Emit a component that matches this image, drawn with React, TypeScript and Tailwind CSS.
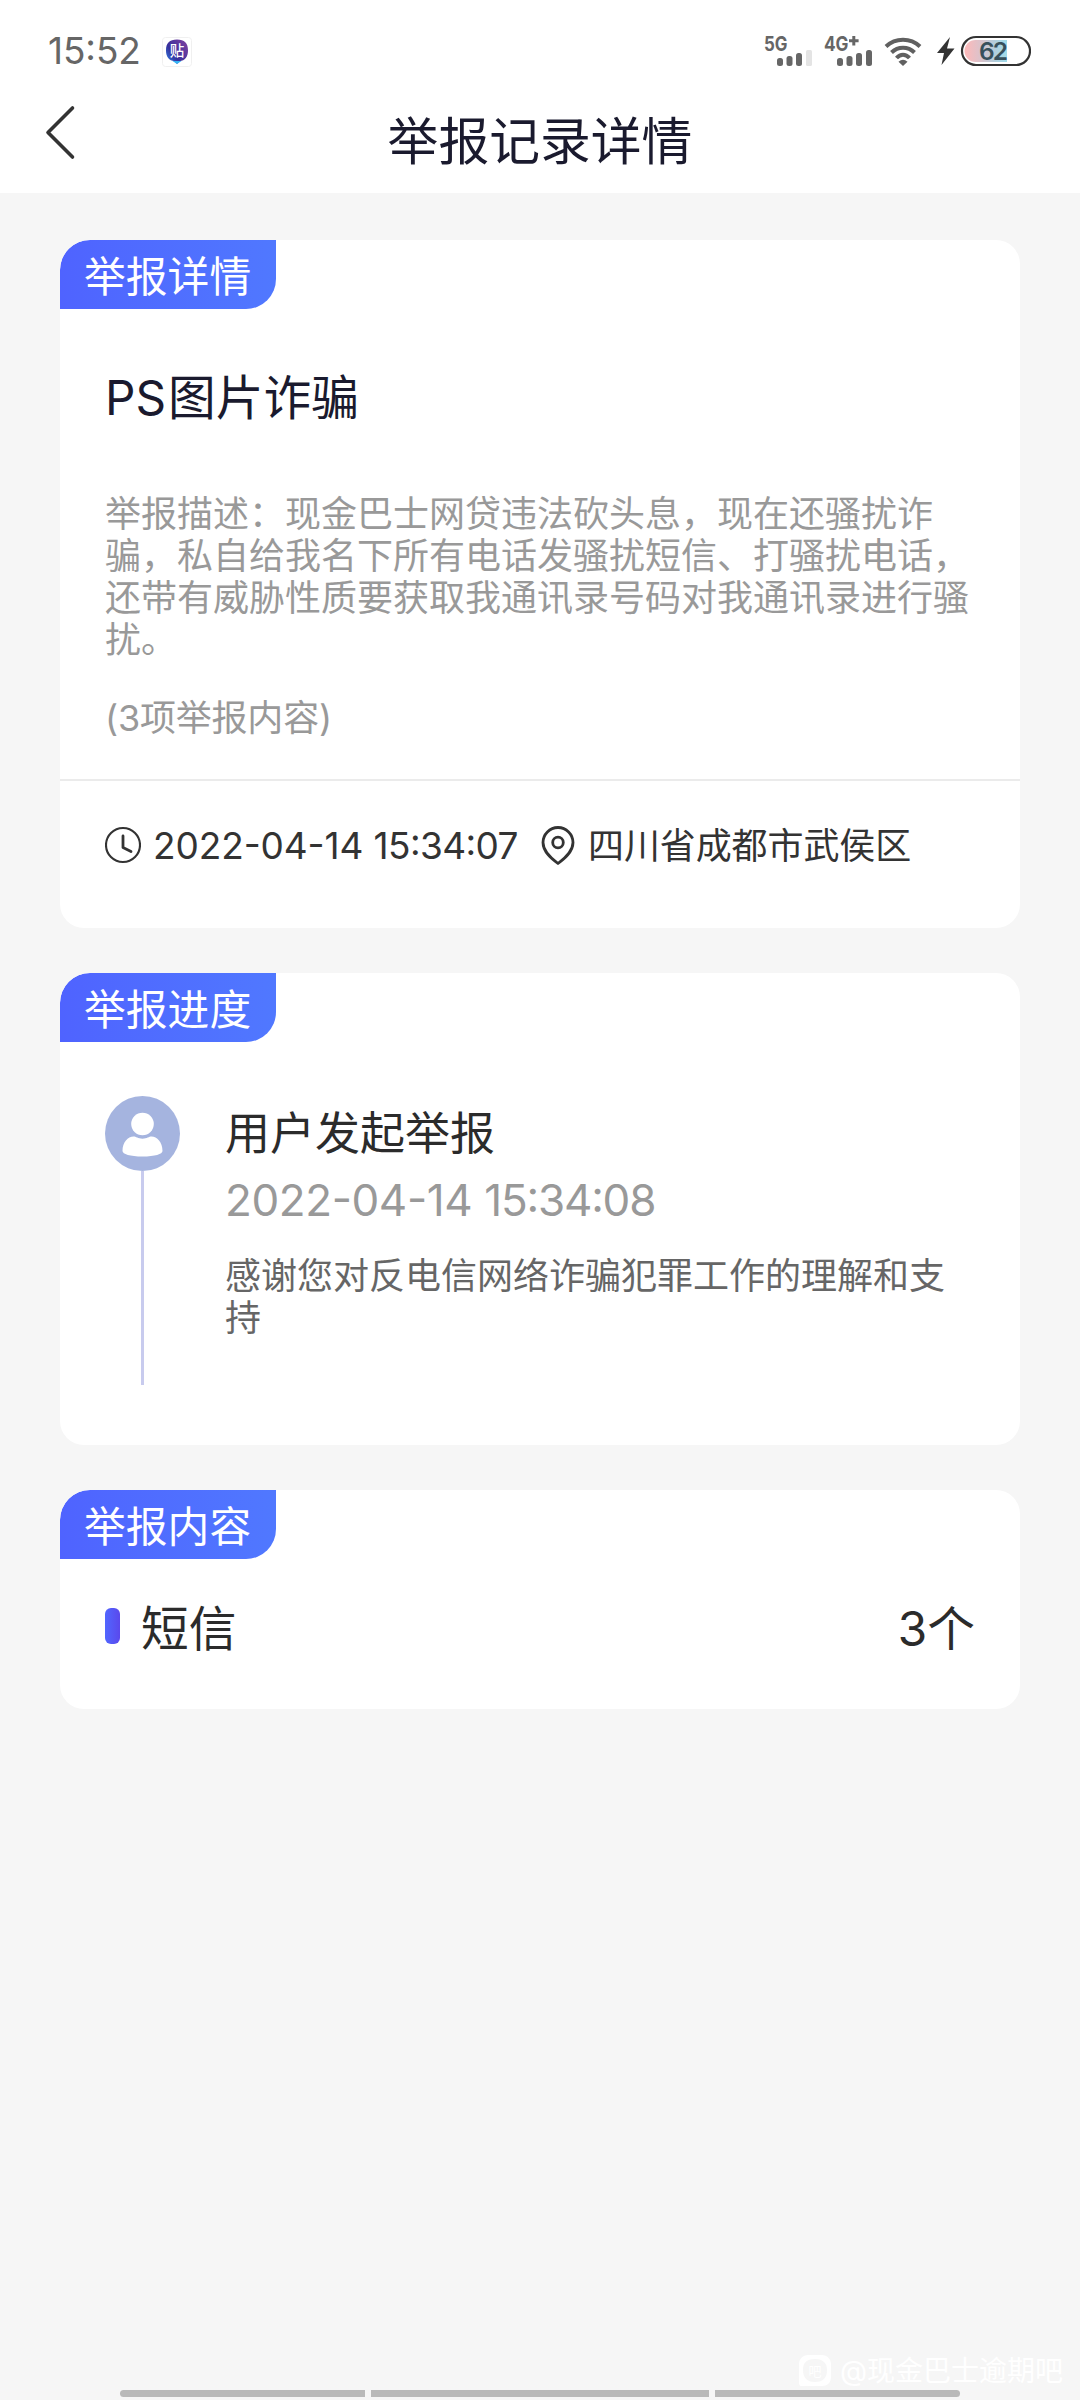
import React from 'react';

function Tag({ children }: { children: string }) {
  return (
    <div className="flex h-[69px] w-[216px] items-center rounded-tl-[30px] rounded-br-[30px] bg-linear-to-r from-[#4f63ff] to-[#5078ff] pt-[5px] pl-[24px] text-[41.8px] leading-[64px] text-white">
      {children}
    </div>
  );
}

function Card({ title, className, children }: { title: string; className: string; children: React.ReactNode }) {
  return (
    <section className={'overflow-hidden rounded-[24px] rounded-tl-[30px] bg-white ' + className}>
      <Tag>{title}</Tag>
      {children}
    </section>
  );
}

function StatusBar() {
  return (
    <div className="flex h-[100px] items-start pr-[49px] pl-[48px]">
      <span className="mt-[26px] w-[114px] text-[37px] leading-[50px] tracking-[-0.1px] text-[#666] [font-feature-settings:'case']">15:52</span>
      <svg className="mt-[37px]" width="30" height="30" viewBox="0 0 30 30">
        <defs>
          <linearGradient id="tie" x1="0" y1="1" x2="1" y2="0.2">
            <stop offset="0" stopColor="#2f8cf0" />
            <stop offset="0.4" stopColor="#35309c" />
            <stop offset="1" stopColor="#7a3fa0" />
          </linearGradient>
        </defs>
        <rect x="0.5" y="0.5" width="29" height="29" rx="3" fill="#fff" stroke="#f0f0f0" />
        <path d="M15 2.5C22.5 2.5 26 6 26 13.500C26 20 23 23.500 17.500 24.200L15 27L12.500 24.200C7 23.500 4 20 4 13.500C4 6 7.500 2.500 15 2.500Z" fill="url(#tie)" />
        <path d="M10.500 24L15 27L19.500 24Z" fill="#35b4f5" />
        <text x="15" y="19.300" fontSize="14.500" fontWeight="500" textAnchor="middle" fill="#fff">贴</text>
      </svg>
      <div className="grow" />
      <svg className="mt-[30px]" width="268" height="42" viewBox="0 0 268 42">
        <g fill="#666" fontWeight="700" fontSize="20">
          <text x="1" y="20.500" textLength="23.500" lengthAdjust="spacingAndGlyphs">5G</text>
          <text x="61" y="20.500" textLength="24.500" lengthAdjust="spacingAndGlyphs">4G</text>
          <path d="M90.800 6V15.500M86 10.800H95.600" stroke="#666" strokeWidth="3" />
        </g>
        <g fill="#666">
          <rect x="14" y="28" width="6" height="8" rx="2.500" />
          <rect x="23.500" y="26" width="6" height="10" rx="2.500" />
          <rect x="33" y="23" width="6" height="13" rx="2.500" />
          <rect x="43" y="20" width="6" height="16" rx="1.500" fill="#e4e4e4" />
          <rect x="74" y="28" width="6" height="8" rx="2.500" />
          <rect x="83.500" y="26" width="6" height="10" rx="2.500" />
          <rect x="93" y="23" width="6" height="13" rx="2.500" />
          <rect x="103" y="20" width="6" height="16" rx="2.500" />
        </g>
        <g transform="translate(1 0)" fill="none" stroke="#606060" strokeWidth="4">
          <path d="M122 16.500C131.500 7.500 146.500 7.500 156 16.500" />
          <path d="M127.500 22.500C134 16 144 16 150.500 22.500" />
          <path d="M132.500 28C136.500 23.500 141.500 23.500 145.500 28" />
          <path d="M134.500 31.800Q139 27.500 143.500 31.800L139 36Z" fill="#606060" stroke="none" />
        </g>
        <path d="M187 7L174 23H181L178.500 35L191.500 18.500H184Z" fill="#333" />
        <defs>
          <linearGradient id="charge" x1="0" y1="0" x2="1" y2="0">
            <stop offset="0" stopColor="#ffb9b9" />
            <stop offset="0.400" stopColor="#d9c3cc" />
            <stop offset="0.700" stopColor="#b4cddb" />
            <stop offset="1" stopColor="#9fdcec" />
          </linearGradient>
        </defs>
        <path d="M212.500 10H244V32H212.500A11 11 0 0 1 212.500 10Z" fill="url(#charge)" />
        <rect x="199" y="7" width="68" height="28" rx="14" fill="none" stroke="#333" strokeWidth="2.200" />
        <text x="216" y="30" fontSize="24.500" fontWeight="600" fill="#38505c" textLength="29">62</text>
      </svg>
    </div>
  );
}

export default function App() {
  return (
    <div lang="zh-CN" className="flex h-[2400px] w-[1080px] flex-col overflow-hidden bg-[#f6f6f6] font-['Inter','Noto_Sans_CJK_SC',sans-serif] whitespace-nowrap text-[#333]">
      <header className="h-[193px] shrink-0 bg-white">
        <StatusBar />
        <div className="flex items-start">
          <svg className="mt-[3px] ml-[40px] shrink-0" width="40" height="60" viewBox="0 0 40 60">
            <path d="M32.500 5L8 29.500L32.500 54" fill="none" stroke="#333" strokeWidth="3.600" strokeLinecap="round" strokeLinejoin="round" />
          </svg>
          <h1 className="mt-[12px] -ml-[80px] grow text-center text-[50.800px] leading-[60px] text-[#1a1a2e]">举报记录详情</h1>
        </div>
      </header>

      <main className="flex flex-col px-[60px] pt-[47px]">
        <Card title="举报详情" className="h-[688px]">
          <h2 className="mt-[59px] ml-[45px] text-[47.700px] leading-[60px] text-[#1a1a2e]"><span className="mr-[2px]">PS</span>图片诈骗</h2>
          <p className="mt-[65px] ml-[45px] text-[36px] leading-[42px] text-[#999]">
            举报描述：现金巴士网贷违法砍头息，现在还骚扰诈
            <br />
            骗，私自给我名下所有电话发骚扰短信、打骚扰电话，
            <br />
            还带有威胁性质要获取我通讯录号码对我通讯录进行骚
            <br />
            扰。
          </p>
          <p className="mt-[36px] ml-[45px] text-[36px] leading-[42px] tracking-[-0.200px] text-[#999]">(3项举报内容)</p>
          <div className="mt-[40px] h-[2px] bg-[#ebebeb]" />
          <div className="flex items-center pt-[43px] pl-[45px] text-[36px] leading-[42px]">
            <svg width="36" height="42" viewBox="0 0 36 42">
              <g fill="none" stroke="#333" strokeLinecap="round" strokeLinejoin="round">
                <circle cx="18" cy="20" r="17" strokeWidth="2.100" />
                <path d="M18 11V22.500L26 26.500" strokeWidth="2.800" />
              </g>
            </svg>
            <span className="ml-[12px] w-[388px] pt-[1px] text-[37px] [font-feature-settings:'case']">
              <span className="tracking-[-0.100px]">2022-04-14 </span>
              <span className="tracking-[-0.600px]">15:34:07</span>
            </span>
            <svg width="34" height="42" viewBox="0 0 34 42">
              <g fill="none" stroke="#333" strokeWidth="2.800">
                <path d="M17 38.500C11 34 2 27 2 17.500A15 15 0 0 1 32 17.500C32 27 23 34 17 38.500Z" strokeLinejoin="round" />
                <circle cx="17" cy="17.500" r="5.300" />
              </g>
            </svg>
            <span className="ml-[13px] tracking-[-0.100px]">四川省成都市武侯区</span>
          </div>
        </Card>

        <Card title="举报进度" className="mt-[45px] h-[472px]">
          <div className="flex pt-[54px] pl-[45px]">
            <div className="flex w-[75px] flex-col items-center">
              <svg width="75" height="75" viewBox="0 0 75 75">
                <circle cx="37.500" cy="37.500" r="37.500" fill="#a5b4df" />
                <circle cx="37.500" cy="28" r="11.300" fill="#fff" />
                <path d="M17.500 55C17.500 46 23 40.500 28.500 40.500C31 40.500 33 42.700 37.500 42.700C42 42.700 44 40.500 46.500 40.500C52 40.500 57.500 46 57.500 55C57.500 58 50 60.500 37.500 60.500C25 60.500 17.500 58 17.500 55Z" fill="#fff" />
              </svg>
              <div className="h-[214px] w-[3px] bg-[#c8cbee]" />
            </div>
            <div className="ml-[45px]">
              <h3 className="mt-[8px] text-[45px] leading-[60px] text-[#2b2b2b]">用户发起举报</h3>
              <p className="mt-[6px] text-[44px] leading-[60px] text-[#999] [font-feature-settings:'case']">
                <span className="tracking-[-0.400px]">2022-04-14 </span>
                <span className="tracking-[-1.200px]">15:34:08</span>
              </p>
              <p className="mt-[25px] text-[36px] leading-[42px] text-[#666]">
                感谢您对反电信网络诈骗犯罪工作的理解和支
                <br />
                持
              </p>
            </div>
          </div>
        </Card>

        <Card title="举报内容" className="mt-[45px] h-[219px]">
          <div className="flex items-center pt-[40px] pr-[45px] pl-[45px] text-[47.700px] leading-[60px] text-[#2b2b2b]">
            <span className="-mt-[6px] h-[36px] w-[15px] rounded-[6px] bg-linear-to-r from-[#5066ff] to-[#5a48ec]" />
            <span className="ml-[21px]">短信</span>
            <span className="ml-auto">3个</span>
          </div>
        </Card>
      </main>

      <footer className="mt-auto flex flex-col">
        <div className="flex h-[32px] items-center justify-end pr-[17px] text-white">
          <svg width="32" height="32" viewBox="0 0 32 32">
            <path fillRule="evenodd" d="M9 0H23C28 0 32 4 32 9V22C32 28 28 31 23 31H2C0 31 0 28 0 26V9C0 4 4 0 9 0ZM16 4C7 4 4 8 4 15C4 23 8 27 16 27C24 27 28 23 28 15C28 8 24 4 16 4Z" fill="#fff" />
            <text x="16" y="20.500" fontSize="13" textAnchor="middle" fill="#fff">吧</text>
          </svg>
          <span className="ml-[9px] text-[28px] leading-[30px]">@现金巴士逾期吧</span>
        </div>
        <div className="mx-[120px] mt-[3px] mb-[3px] flex h-[7px] gap-[6px]">
          <div className="w-[245px] rounded-l-full bg-[#b9b9b9]" />
          <div className="grow bg-[#b9b9b9]" />
          <div className="w-[245px] rounded-r-full bg-[#b9b9b9]" />
        </div>
      </footer>
    </div>
  );
}
